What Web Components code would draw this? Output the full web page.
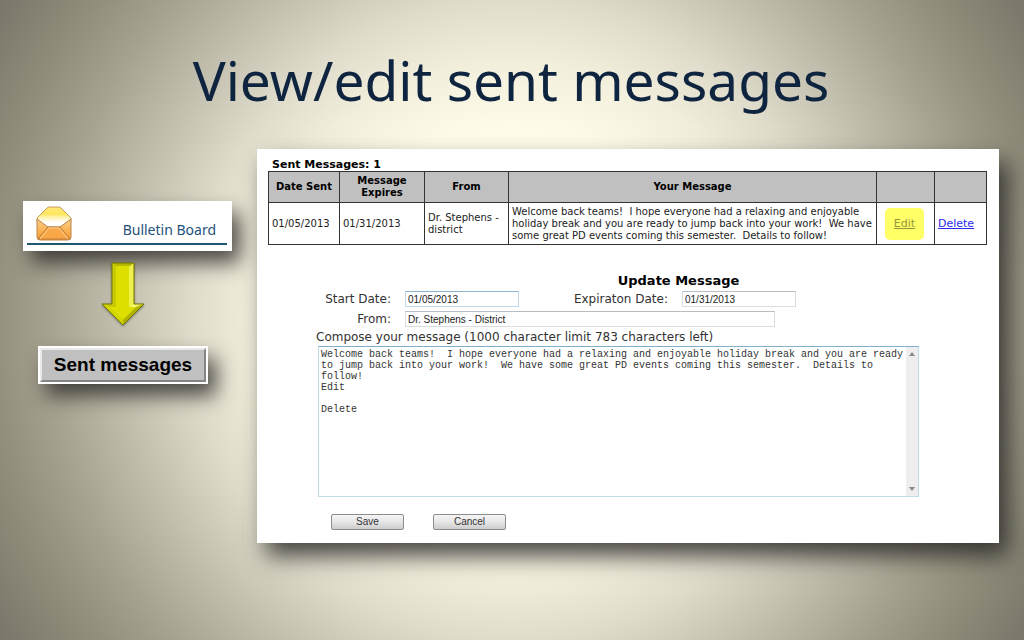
<!DOCTYPE html>
<html lang="en">
<head>
<meta charset="utf-8">
<title>View/edit sent messages</title>
<style>
html, body { margin: 0; }
</style>
</head>
<body>
<message-slide>
  <span slot="title">View/edit sent messages</span>
  <step-trail slot="steps"></step-trail>
  <message-panel slot="content"></message-panel>
</message-slide>

<script>
const define = (name, html, setup) => customElements.define(name, class extends HTMLElement {
  constructor() {
    super();
    this.attachShadow({ mode: 'open' }).innerHTML = html;
    if (setup) setup(this);
  }
});

define('message-slide', `
<style>
  :host {
    display: block; box-sizing: border-box; min-height: 100vh; padding: 48px 25px 48px 23px;
    background: radial-gradient(circle at 50% 50%, #fffdea 0, #fffdea 190px, #f1eedc 260px, #dfdccb 320px, #bfbcab 400px, #a5a290 465px, #928f7d 520px, #79766a 604px, #706d5e 700px);
    font-family: "DejaVu Sans", Verdana, sans-serif;
  }
  h1 { margin: 0 0 37px; font: 400 55px/64px "Noto Sans", sans-serif; color: #0f243e; text-align: center; }
  .columns { display: grid; grid-template-columns: 209px minmax(0, 1fr); gap: 25px; align-items: start; }
</style>
<h1><slot name="title"></slot></h1>
<div class="columns"><slot name="steps"></slot><slot name="content"></slot></div>`);

define('step-trail', `
<style>
  :host { display: flex; flex-direction: column; padding-top: 52px; }
  down-arrow { align-self: center; margin: 11px 10px 20px 0; }
  raised-button { margin: 0 24px 0 15px; }
</style>
<bulletin-card>Bulletin Board</bulletin-card>
<down-arrow></down-arrow>
<raised-button>Sent messages</raised-button>`);

define('bulletin-card', `
<style>
  :host { display: block; box-sizing: border-box; padding: 5px 5px 5px 4px; background: #fff; box-shadow: 8px 12px 20px 0 rgba(40,38,36,.8); }
  a { display: flex; align-items: flex-end; justify-content: space-between; box-sizing: border-box; height: 39px; padding: 0 11px 2px 9px; border-bottom: 2px solid #1f5670; margin-bottom: 1px; color: #24527a; text-decoration: none; font: 14px/22px "Noto Sans", sans-serif; }
  svg { display: block; }
</style>
<a href="#bulletin">
  <svg width="36" height="35" viewBox="0 0 36 35" aria-hidden="true">
    <defs>
      <linearGradient id="flap" x2="0" y2="1"><stop stop-color="#ffe878"/><stop offset=".3" stop-color="#ffe65e"/><stop offset=".4" stop-color="#fff1a0"/><stop offset=".65" stop-color="#fff"/></linearGradient>
      <linearGradient id="body" x2="0" y2="1"><stop stop-color="#fbcf86"/><stop offset="1" stop-color="#f79a2c"/></linearGradient>
    </defs>
    <path d="M1 12 11 2Q12 1 14 1H22Q24 1 25 2L35 12 34 25H2Z" fill="url(#flap)" stroke="#c79a58"/>
    <path d="M1 13 12 21H24L35 13V31Q35 34 32 34H4Q1 34 1 31Z" fill="url(#body)" stroke="#b98550"/>
    <path d="M2 33 12 21H24L34 33Z" fill="#f8a848" stroke="#c17d38"/>
    <path d="M4 33 13 22H23L32 33" fill="none" stroke="#ffd08a"/>
  </svg>
  <slot></slot>
</a>`);

define('down-arrow', `
<style>:host { display: block; } svg { display: block; filter: drop-shadow(0 1px 1px rgba(50,50,30,.55)); }</style>
<svg width="44" height="64" viewBox="0 0 44 64" aria-hidden="true">
  <path d="M11 1H33V42H43L22 63 1 42H11Z" fill="#dddf00"/>
  <path d="M11 1H33L29 4H15Z" fill="#b5b700"/>
  <path d="M11 1 15 4V45H9L1 42H11Z" fill="#c9cb00"/>
  <path d="M33 1V42L28 45V5Z" fill="#eef04e"/>
  <path d="M33 42H43L35 45H28Z" fill="#f5f76e"/>
  <path d="M43 42 22 63V58L35 45Z" fill="#b0b200"/>
  <path d="M1 42 22 63V58L9 45Z" fill="#d3d600"/>
  <path d="M11 1H33V42H43L22 63 1 42H11Z" fill="none" stroke="#777900"/>
</svg>`);

define('raised-button', `
<style>
  :host { display: block; padding: 2px; background: #fff; box-shadow: 8px 12px 20px 0 rgba(40,38,36,.8); }
  button { display: block; box-sizing: border-box; width: 100%; height: 34px; padding: 0; border: 2px solid; border-color: #e9e9e9 #858585 #858585 #e9e9e9; background: #c0c0c0; color: #000; font: bold 19px/28px "Liberation Sans", Arial, sans-serif; }
</style>
<button type="button"><slot></slot></button>`);

define('message-panel', `
<style>
  :host { display: block; box-sizing: border-box; padding: 10px 12px 13px 11px; background: #fff; box-shadow: 9px 13px 22px 0 rgba(40,38,36,.85); }
  update-form { margin: 27px 68px 0 50px; }
</style>
<sent-table></sent-table>
<update-form></update-form>`);

define('sent-table', `
<style>
  :host { display: block; color: #222; }
  h2 { margin: 0 0 0 4px; font-size: 11px; line-height: 12px; color: #000; }
  table { width: 100%; table-layout: fixed; border-collapse: collapse; font-size: 10px; line-height: 12px; white-space: nowrap; }
  th, td { border: 1px solid #333; padding: 0 3px; }
  th { height: 30px; background: #c0c0c0; color: #000; }
  td { height: 41px; text-align: left; }
  td a { font-size: 11px; color: #2a2af0; }
  .edit { padding: 0 8px; }
  .edit a { display: block; box-sizing: border-box; width: 39px; height: 32px; border-radius: 5px; background: #ffff66; color: #96963c; line-height: 32px; text-align: center; }
</style>
<h2>Sent Messages: 1</h2>
<table>
  <colgroup><col style="width:71px"><col style="width:85px"><col style="width:84px"><col><col style="width:58px"><col style="width:52px"></colgroup>
  <thead><tr><th>Date Sent</th><th>Message<br>Expires</th><th>From</th><th>Your Message</th><th></th><th></th></tr></thead>
  <tbody><tr>
    <td>01/05/2013</td><td>01/31/2013</td><td>Dr. Stephens -<br>district</td>
    <td>Welcome back teams!&nbsp; I hope everyone had a relaxing and enjoyable<br>holiday break and you are ready to jump back into your work!&nbsp; We have<br>some great PD events coming this semester.&nbsp; Details to follow!</td>
    <td class="edit"><a href="#edit">Edit</a></td><td><a href="#delete">Delete</a></td>
  </tr></tbody>
</table>`);

define('update-form', `
<style>
  :host { display: block; color: #333; font-size: 12px; }
  h2 { margin: 0 0 1px; padding-left: 120px; font-size: 13px; line-height: 18px; text-align: center; color: #000; }
  .fields { display: grid; grid-template-columns: 73px 114px minmax(0, 1fr) 114px 109px; gap: 4px 14px; }
  label { text-align: right; line-height: 16px; white-space: nowrap; }
  input { display: block; box-sizing: border-box; width: 100%; height: 16px; padding: 0 2px; border: 1px solid #d9dde0; border-top-color: #b9bdc2; background: #fff; color: #222; font: 10px/14px "Liberation Sans", Arial, sans-serif; }
  #start { border-color: #8db4d2 #c2d9ea #c2d9ea; }
  .wide { grid-column: 2 / 5; margin-right: 21px; }
  .compose { display: block; margin: 2px 0 0 -2px; text-align: left; line-height: 17px; }
  .box { display: flex; box-sizing: border-box; height: 151px; border: 1px solid #bfdcea; border-top-color: #7fb0d0; }
  textarea { flex: 1; min-width: 0; box-sizing: border-box; margin: 0; padding: 2px 0 0 2px; border: 0; outline: 0; resize: none; overflow: hidden; background: #fff; color: #333; font: 10px/11px "Liberation Mono", "Courier New", monospace; }
  .bar { display: flex; flex-direction: column; justify-content: space-between; align-items: center; width: 12px; padding: 5px 0; box-sizing: border-box; background: #eee; }
  .bar svg { display: block; }
  .actions { display: flex; gap: 29px; margin: 17px 0 0 13px; }
  button { box-sizing: border-box; width: 73px; height: 16px; padding: 0; border: 1px solid #8c8c8c; border-radius: 2px; background: linear-gradient(#f5f5f5, #e6e6e6 50%, #cdcdcd); color: #333; font: 10px/14px "Liberation Sans", Arial, sans-serif; }
</style>
<form>
  <h2>Update Message</h2>
  <div class="fields">
    <label for="start">Start Date:</label><input id="start" value="01/05/2013">
    <label for="expires">Expiraton Date:</label><input id="expires" value="01/31/2013"><span></span>
    <label for="from">From:</label><div class="wide"><input id="from" value="Dr. Stephens - District"></div>
  </div>
  <label class="compose" for="message">Compose your message (1000 character limit 783 characters left)</label>
  <div class="box">
    <textarea id="message" spellcheck="false">Welcome back teams!  I hope everyone had a relaxing and enjoyable holiday break and you are ready
to jump back into your work!  We have some great PD events coming this semester.  Details to
follow!
Edit

Delete</textarea>
    <div class="bar" aria-hidden="true">
      <svg width="6" height="4" viewBox="0 0 6 4"><path d="M0 4 3 0 6 4Z" fill="#8a8a8a"/></svg>
      <svg width="6" height="4" viewBox="0 0 6 4"><path d="M0 0 3 4 6 0Z" fill="#8a8a8a"/></svg>
    </div>
  </div>
  <div class="actions"><button type="button">Save</button><button type="button">Cancel</button></div>
</form>`);
</script>
</body>
</html>
